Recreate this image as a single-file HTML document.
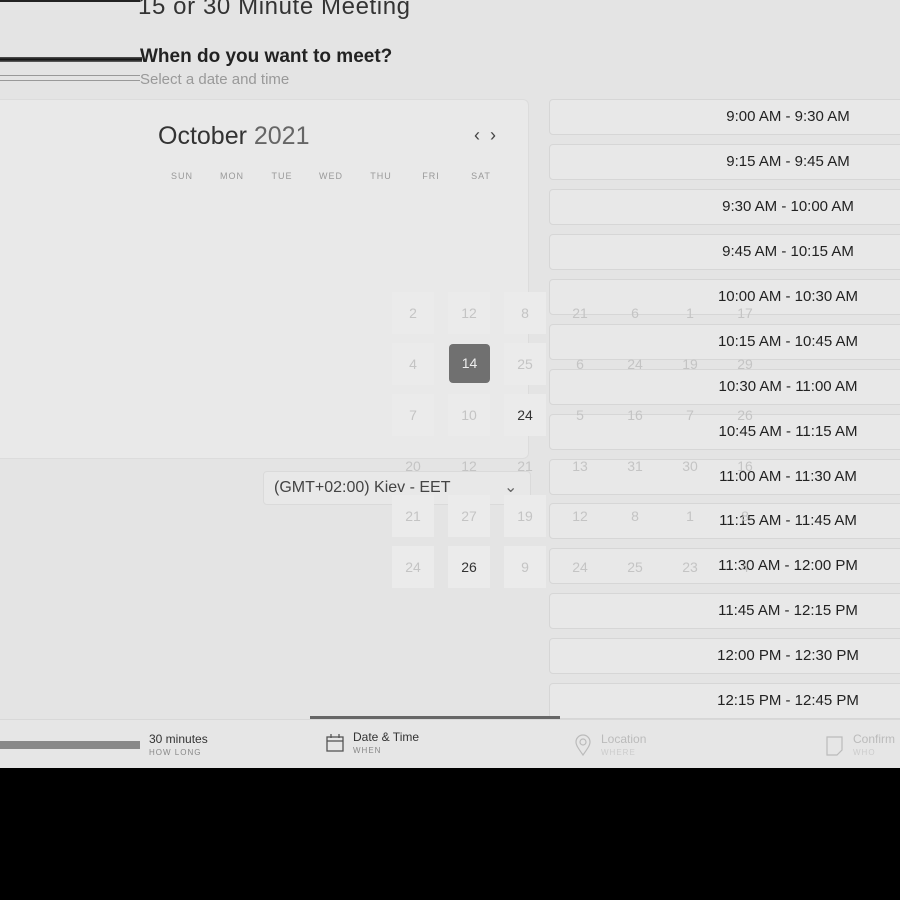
<!DOCTYPE html>
<html><head><meta charset="utf-8"><style>
*{margin:0;padding:0;box-sizing:border-box}
body{width:900px;height:900px;background:#000;position:relative;overflow:hidden;font-family:"Liberation Sans","DejaVu Sans",sans-serif}
.page{position:absolute;left:0;top:0;width:900px;height:768px;background:#e4e4e4;overflow:hidden}
.a{position:absolute}
.slot{position:absolute;left:549px;width:380px;height:36px;background:#e8e8e8;border:1px solid #d6d6d6;border-radius:4px;font-size:15px;color:#222;text-align:center;line-height:34px}
.slot span{position:absolute;left:0;width:476px;text-align:center;top:0}
.d{position:absolute;width:42px;height:42px;line-height:42px;text-align:center;font-size:14px;color:#c4c4c4}
.bg{background:#ebebeb}
.wk{position:absolute;top:171px;font-size:9px;color:#999;letter-spacing:1px;width:40px;text-align:center}
</style></head><body>
<div class="page">
<div class="a" style="left:0;top:0;width:140px;height:2px;background:#222"></div>
<div class="a" style="left:138px;top:-7px;font-size:24px;color:#333;letter-spacing:0.6px">15 or 30 Minute Meeting</div>
<div class="a" style="left:0;top:57px;width:142px;height:5px;background:linear-gradient(#555,#111,#666)"></div>
<div class="a" style="left:140px;top:46px;font-size:19px;font-weight:bold;color:#222">When do you want to meet?</div>
<div class="a" style="left:0;top:75px;width:140px;height:1px;background:#999"></div>
<div class="a" style="left:0;top:80px;width:140px;height:1px;background:#999"></div>
<div class="a" style="left:140px;top:71px;font-size:15px;color:#999">Select a date and time</div>
<div class="a" style="left:0;top:99px;width:529px;height:360px;background:#e9e9e9;border:1px solid #dcdcdc;border-left:none;border-radius:0 6px 6px 0"></div>
<div class="a" style="left:158px;top:122px;font-size:25px;color:#333">October <span style="color:#666">2021</span></div>
<div class="a" style="left:474px;top:125px;font-size:18px;color:#444">&#8249;&nbsp;&nbsp;&#8250;</div>
<div class="wk" style="left:162px">SUN</div><div class="wk" style="left:212px">MON</div><div class="wk" style="left:262px">TUE</div><div class="wk" style="left:311px">WED</div><div class="wk" style="left:361px">THU</div><div class="wk" style="left:411px">FRI</div><div class="wk" style="left:461px">SAT</div>
<div class="a" style="left:263px;top:471px;width:268px;height:34px;background:#e8e8e8;border:1px solid #dadada;border-radius:4px;font-size:16px;color:#444;line-height:32px;padding-left:10px">(GMT+02:00) Kiev - EET<span style="position:absolute;left:240px;color:#666">&#8964;</span></div>

<div class="slot" style="top:99px"><span>9:00 AM - 9:30 AM</span></div>
<div class="slot" style="top:144px"><span>9:15 AM - 9:45 AM</span></div>
<div class="slot" style="top:189px"><span>9:30 AM - 10:00 AM</span></div>
<div class="slot" style="top:234px"><span>9:45 AM - 10:15 AM</span></div>
<div class="slot" style="top:279px"><span>10:00 AM - 10:30 AM</span></div>
<div class="slot" style="top:324px"><span>10:15 AM - 10:45 AM</span></div>
<div class="slot" style="top:369px"><span>10:30 AM - 11:00 AM</span></div>
<div class="slot" style="top:414px"><span>10:45 AM - 11:15 AM</span></div>
<div class="slot" style="top:459px"><span>11:00 AM - 11:30 AM</span></div>
<div class="slot" style="top:503px"><span>11:15 AM - 11:45 AM</span></div>
<div class="slot" style="top:548px"><span>11:30 AM - 12:00 PM</span></div>
<div class="slot" style="top:593px"><span>11:45 AM - 12:15 PM</span></div>
<div class="slot" style="top:638px"><span>12:00 PM - 12:30 PM</span></div>
<div class="slot" style="top:683px"><span>12:15 PM - 12:45 PM</span></div>

<div class="d bg" style="left:392px;top:292px">2</div><div class="d bg" style="left:448px;top:292px">12</div><div class="d bg" style="left:504px;top:292px">8</div><div class="d" style="left:559px;top:292px">21</div><div class="d" style="left:614px;top:292px">6</div><div class="d" style="left:669px;top:292px">1</div><div class="d" style="left:724px;top:292px">17</div>
<div class="d bg" style="left:392px;top:343px">4</div><div class="d" style="left:449px;top:344px;width:41px;height:39px;line-height:39px;background:#707070;color:#eee;border-radius:4px">14</div><div class="d bg" style="left:504px;top:343px">25</div><div class="d" style="left:559px;top:343px">6</div><div class="d" style="left:614px;top:343px">24</div><div class="d" style="left:669px;top:343px">19</div><div class="d" style="left:724px;top:343px">29</div>
<div class="d bg" style="left:392px;top:394px">7</div><div class="d bg" style="left:448px;top:394px">10</div><div class="d bg" style="left:504px;top:394px;color:#333">24</div><div class="d" style="left:559px;top:394px">5</div><div class="d" style="left:614px;top:394px">16</div><div class="d" style="left:669px;top:394px">7</div><div class="d" style="left:724px;top:394px">26</div>
<div class="d" style="left:392px;top:445px">20</div><div class="d" style="left:448px;top:445px">12</div><div class="d" style="left:504px;top:445px">21</div><div class="d" style="left:559px;top:445px">13</div><div class="d" style="left:614px;top:445px">31</div><div class="d" style="left:669px;top:445px">30</div><div class="d" style="left:724px;top:445px">16</div>
<div class="d bg" style="left:392px;top:495px">21</div><div class="d bg" style="left:448px;top:495px">27</div><div class="d bg" style="left:504px;top:495px">19</div><div class="d" style="left:559px;top:495px">12</div><div class="d" style="left:614px;top:495px">8</div><div class="d" style="left:669px;top:495px">1</div><div class="d" style="left:724px;top:495px">8</div>
<div class="d bg" style="left:392px;top:546px">24</div><div class="d bg" style="left:448px;top:546px;color:#333">26</div><div class="d bg" style="left:504px;top:546px">9</div><div class="d" style="left:559px;top:546px">24</div><div class="d" style="left:614px;top:546px">25</div><div class="d" style="left:669px;top:546px">23</div><div class="d" style="left:724px;top:546px">4</div>

<div class="a" style="left:0;top:719px;width:900px;height:49px;background:#e6e6e6;border-top:1px solid #d8d8d8"></div>
<div class="a" style="left:310px;top:716px;width:250px;height:3px;background:#666"></div>
<div class="a" style="left:0;top:741px;width:140px;height:8px;background:#888"></div>
<div class="a" style="left:149px;top:732px;font-size:12px;color:#333">30 minutes</div>
<div class="a" style="left:149px;top:748px;font-size:8px;color:#888;letter-spacing:1px">HOW LONG</div>
<svg class="a" style="left:325px;top:733px" width="20" height="20" viewBox="0 0 20 20" fill="none" stroke="#555" stroke-width="1.3"><rect x="2" y="4" width="16" height="14"/><line x1="2" y1="8" x2="18" y2="8"/><line x1="6" y1="1" x2="6" y2="5"/><line x1="14" y1="1" x2="14" y2="5"/></svg>
<div class="a" style="left:353px;top:730px;font-size:12px;color:#333">Date &amp; Time</div>
<div class="a" style="left:353px;top:746px;font-size:8px;color:#888;letter-spacing:1px">WHEN</div>
<svg class="a" style="left:575px;top:734px" width="16" height="22" viewBox="0 0 16 22" fill="none" stroke="#bbb" stroke-width="1.2"><path d="M8 21C3 14 1 11 1 8a7 7 0 0 1 14 0c0 3-2 6-7 13z"/><circle cx="8" cy="8" r="3"/></svg>
<div class="a" style="left:601px;top:732px;font-size:12px;color:#bbb">Location</div>
<div class="a" style="left:601px;top:748px;font-size:8px;color:#ccc;letter-spacing:1px">WHERE</div>
<svg class="a" style="left:826px;top:736px" width="18" height="20" viewBox="0 0 18 20" fill="none" stroke="#bbb" stroke-width="1.2"><path d="M1 1h15v13l-5 5H1z"/></svg>
<div class="a" style="left:853px;top:732px;font-size:12px;color:#bbb">Confirm</div>
<div class="a" style="left:853px;top:748px;font-size:8px;color:#ccc;letter-spacing:1px">WHO</div>
</div>
</body></html>
